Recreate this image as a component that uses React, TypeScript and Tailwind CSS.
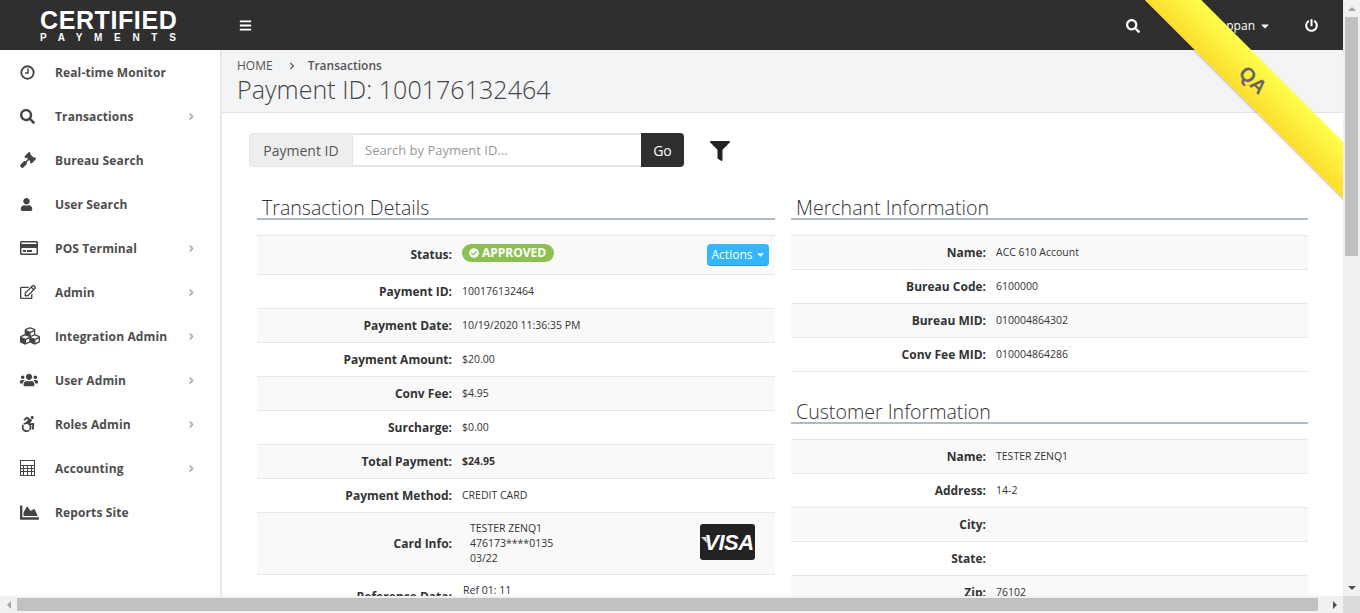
import React from 'react';
import {
  FaAccessibleIcon, FaAngleRight, FaBars, FaCaretDown, FaChartArea, FaCheckCircle, FaChevronRight, FaCubes, FaFilter, FaGavel,
  FaPowerOff, FaRegCreditCard, FaRegEdit, FaSearch, FaUser, FaUsers,
} from 'react-icons/fa';

const ClockIcon = () => (
  <svg width="15" height="15" viewBox="0 0 15 15" fill="none" stroke="#444">
    <circle cx="7.5" cy="7.5" r="6.2" strokeWidth="1.9" />
    <path d="M8 3.5V8H5" strokeWidth="1.5" />
  </svg>
);

const LedgerIcon = () => (
  <svg width="15" height="16" viewBox="0 0 15 16" fill="none" stroke="#444" strokeWidth="1">
    <rect x="0.5" y="0.5" width="14" height="15" />
    <path d="M0 5.5H15M0 8.5H15M0 11.5H15M3.5 5V16M7.5 5V16M11.5 5V16" />
  </svg>
);

const navItems = [
  { name: 'Real-time Monitor', icon: <ClockIcon /> },
  { name: 'Transactions', icon: <FaSearch className="text-[15px] text-[#444]" />, more: true },
  { name: 'Bureau Search', icon: <FaGavel className="text-[16px] text-[#444]" /> },
  { name: 'User Search', icon: <FaUser className="text-[13px] text-[#444]" /> },
  { name: 'POS Terminal', icon: <FaRegCreditCard className="text-[18px] text-[#444]" />, more: true },
  { name: 'Admin', icon: <FaRegEdit className="text-[16px] text-[#444]" />, more: true },
  { name: 'Integration Admin', icon: <FaCubes className="text-[20px] text-[#444]" />, more: true },
  { name: 'User Admin', icon: <FaUsers className="text-[18px] text-[#444]" />, more: true },
  { name: 'Roles Admin', icon: <FaAccessibleIcon className="text-[16px] text-[#444]" />, more: true },
  { name: 'Accounting', icon: <LedgerIcon />, more: true },
  { name: 'Reports Site', icon: <FaChartArea className="text-[19px] text-[#444]" /> },
];

const txRows = [
  ['Payment ID:', '100176132464'],
  ['Payment Date:', '10/19/2020 11:36:35 PM'],
  ['Payment Amount:', '$20.00'],
  ['Conv Fee:', '$4.95'],
  ['Surcharge:', '$0.00'],
  ['Total Payment:', '$24.95'],
  ['Payment Method:', 'CREDIT CARD'],
];

const merchantRows = [
  ['Name:', 'ACC 610 Account'],
  ['Bureau Code:', '6100000'],
  ['Bureau MID:', '010004864302'],
  ['Conv Fee MID:', '010004864286'],
];

const customerRows = [
  ['Name:', 'TESTER ZENQ1'],
  ['Address:', '14-2'],
  ['City:', ''],
  ['State:', ''],
  ['Zip:', '76102'],
];

const stripe = (i: number) => (i % 2 === 0 ? 'bg-[#f9f9f9]' : 'bg-white');

const Heading = ({ title }: { title: string }) => (
  <h2 className="h-[31px] border-b-2 border-[#b0bac3] pl-[5px] text-[19.6px] leading-[38px] font-light text-[#333]">{title}</h2>
);

const Row = ({ label, value, index, bold }: { label: string; value: string; index: number; bold?: boolean }) => (
  <div className={`flex h-[34px] border-t border-[#e7e7e7] ${stripe(index)}`}>
    <div className="w-[195px] shrink-0 pt-[8px] text-right text-[12px] leading-[18px] font-bold text-[#333]">{label}</div>
    <div className={`pl-[10px] pt-[7px] text-[10.5px] leading-[18px] text-[#333] ${bold ? 'font-bold' : ''}`}>{value}</div>
  </div>
);

const Scrollbars = {
  Vertical: () => (
    <div className="flex w-[17px] shrink-0 flex-col items-center bg-[#f1f1f1]">
      <div className="flex h-[17px] w-full items-center justify-center">
        <div className="h-0 w-0 border-x-[4px] border-b-[4px] border-x-transparent border-b-[#a3a3a3]" />
      </div>
      <div className="h-[239px] w-[13px] bg-[#c1c1c1]" />
      <div className="flex-1" />
      <div className="flex h-[17px] w-full items-center justify-center">
        <div className="h-0 w-0 border-x-[4px] border-t-[4px] border-x-transparent border-t-[#505050]" />
      </div>
    </div>
  ),
  Horizontal: () => (
    <div className="flex h-[17px] shrink-0 items-center bg-[#f1f1f1]">
      <div className="flex h-full w-[17px] items-center justify-center">
        <div className="h-0 w-0 border-y-[4px] border-r-[4px] border-y-transparent border-r-[#a3a3a3]" />
      </div>
      <div className="h-[13px] w-[1301px] bg-[#c1c1c1]" />
      <div className="flex-1" />
      <div className="flex h-full w-[17px] items-center justify-center">
        <div className="h-0 w-0 border-y-[4px] border-l-[4px] border-y-transparent border-l-[#505050]" />
      </div>
      <div className="h-full w-[17px] bg-[#dcdcdc]" />
    </div>
  ),
};

const App: React.FC = () => {
  return (
    <div className="relative flex h-[613px] w-[1360px] flex-col overflow-hidden bg-white font-['Open_Sans',sans-serif] text-[#333]">
      <div className="flex min-h-0 flex-1">
        <div className="flex min-w-0 flex-1 flex-col">
          {/* top bar */}
          <header className="flex h-[50px] shrink-0 items-center bg-[#2f2f2f] text-white">
            <div className="flex h-full w-[221px] shrink-0 flex-col items-start pl-[40px] pt-[8px] font-['Liberation_Sans',sans-serif] font-bold">
              <span className="text-[25px] leading-[24px] tracking-[0.6px]">CERTIFIED</span>
              <span className="text-[10px] leading-[11px] tracking-[11.7px]">PAYMENTS</span>
            </div>
            <FaBars className="ml-[18px] text-[13px]" />
            <FaSearch className="ml-[874px] mt-[1px] text-[14px]" />
            <span className="ml-[44px] mt-[1px] w-[71px] text-right text-[12px]">Toppan</span>
            <FaCaretDown className="ml-[4px] mt-[1px] text-[12px]" />
            <FaPowerOff className="ml-[34px] mt-[1px] text-[13px]" />
          </header>

          <div className="flex min-h-0 flex-1">
            {/* sidebar */}
            <nav className="w-[222px] shrink-0 border-r-2 border-[#e4e8ee] bg-white">
              {navItems.map((item) => (
                <div key={item.name} className="flex h-[44px] items-center pl-[20px] pr-[23px]">
                  <span className="flex w-[35px] shrink-0 items-center">{item.icon}</span>
                  <span className="mt-[2px] flex-1 text-[12px] font-bold tracking-[0.12px] text-[#4d4d4d]">{item.name}</span>
                  {item.more && <FaAngleRight className="text-[11px] text-[#aab0b6]" />}
                </div>
              ))}
            </nav>

            <main className="min-w-0 flex-1 overflow-hidden">
              <div className="h-[63px] border-b border-[#dfe4ea] bg-[#f3f4f6] pl-[15px]">
                <div className="flex h-[24px] items-center pt-[7px] text-[12px] leading-[16px] text-[#555]">
                  HOME
                  <FaChevronRight className="ml-[15px] mr-[12px] text-[8px]" />
                  <span className="font-semibold">Transactions</span>
                </div>
                <h1 className="text-[25px] leading-[30px] tracking-[0.05px] font-light text-[#444]">Payment ID: 100176132464</h1>
              </div>

              {/* search */}
              <div className="ml-[27px] mt-[20px] flex items-center">
                <div className="flex h-[34px] w-[435px]">
                  <span className="flex w-[104px] items-center justify-center rounded-l border border-[#e5e6e7] bg-[#eeeeee] text-[14px] text-[#555]">Payment ID</span>
                  <div className="flex flex-1 items-center border-y-2 border-[#e5e6e7] bg-white pl-[12px] pt-[1px] text-[13px] text-[#999]">Search by Payment ID...</div>
                  <span className="flex w-[43px] items-center justify-center rounded-r bg-[#2f2f2f] text-[14px] text-white">Go</span>
                </div>
                <FaFilter className="ml-[26px] mt-[2px] text-[20px] text-[#222]" />
              </div>

              <div className="ml-[35px] mt-[22px] flex w-[1051px] gap-[16px]">
                {/* left column */}
                <section className="w-[518px] shrink-0">
                  <Heading title="Transaction Details" />
                  <div className="mt-[15px]">
                    <div className="flex h-[39px] border-t border-[#e7e7e7] bg-[#f9f9f9]">
                      <div className="w-[195px] shrink-0 pt-[10px] text-right text-[12px] leading-[18px] font-bold">Status:</div>
                      <div className="flex flex-1 items-start justify-between pl-[10px] pr-[6px]">
                        <span className="mt-[8px] flex h-[18px] w-[92px] items-center gap-[3px] rounded-full bg-[#8cc152] pl-[7px] text-[12px] font-bold text-white">
                          <FaCheckCircle className="text-[10px]" />APPROVED
                        </span>
                        <span className="mt-[8px] flex h-[22px] w-[62px] items-center justify-center gap-[3px] rounded-sm border-b border-[#2a9ad6] bg-[#35b6fb] pl-[2px] text-[12px] text-white">
                          Actions<FaCaretDown className="text-[11px]" />
                        </span>
                      </div>
                    </div>
                    {txRows.map(([label, value], i) => (
                      <Row key={label} label={label} value={value} index={i + 1} bold={label === 'Total Payment:'} />
                    ))}
                    <div className="flex h-[62px] border-t border-[#e7e7e7] bg-[#f9f9f9]">
                      <div className="w-[195px] shrink-0 self-center text-right text-[12px] font-bold">Card Info:</div>
                      <div className="flex-1 pl-[18px] pt-[8px] text-[10.5px] leading-[15px]">
                        <div>TESTER ZENQ1</div>
                        <div>476173****0135</div>
                        <div>03/22</div>
                      </div>
                      <div className="mr-[20px] mt-[11px] flex h-[36px] w-[55px] items-center justify-center rounded-[3px] bg-[#222] font-['Liberation_Sans',sans-serif] text-[22px] font-bold italic tracking-[-0.5px] text-white">
                        <svg width="6" height="8" viewBox="0 0 6 8" className="mr-[-3px] mt-[-3px]" fill="#ddd"><path d="M0 0h5l1 6z" /></svg>
                        VISA
                      </div>
                    </div>
                    <div className="flex h-[34px] border-t border-[#e7e7e7] bg-white">
                      <div className="w-[195px] shrink-0 pt-[13px] text-right text-[12px] leading-[18px] font-bold">Reference Data:</div>
                      <div className="pl-[11px] pt-[6px] text-[10.5px] leading-[18px]">Ref 01: 11</div>
                    </div>
                  </div>
                </section>

                {/* right column */}
                <section className="w-[517px] shrink-0">
                  <Heading title="Merchant Information" />
                  <div className="mt-[15px] border-b border-[#e7e7e7]">
                    {merchantRows.map(([label, value], i) => (
                      <Row key={label} label={label} value={value} index={i} />
                    ))}
                  </div>
                  <div className="mt-[21px]">
                    <Heading title="Customer Information" />
                  </div>
                  <div className="mt-[15px]">
                    {customerRows.map(([label, value], i) => (
                      <Row key={label} label={label} value={value} index={i} />
                    ))}
                  </div>
                </section>
              </div>
            </main>
          </div>
        </div>
        <Scrollbars.Vertical />
      </div>
      <Scrollbars.Horizontal />

      {/* QA ribbon, sits over the top right of the page */}
      <div className="pointer-events-none absolute right-[17px] top-0 h-[200px] w-[200px] overflow-hidden">
        <div className="absolute left-[-40px] top-[60px] flex h-[40px] w-[300px] rotate-45 items-center justify-center bg-gradient-to-t from-[#fedc2a] to-[#ffff4d] font-['Liberation_Sans',sans-serif] text-[20px] font-bold text-[#666] shadow-[0_1px_2px_rgba(0,0,60,0.25)]">
          QA
        </div>
      </div>
    </div>
  );
};

export default App;
